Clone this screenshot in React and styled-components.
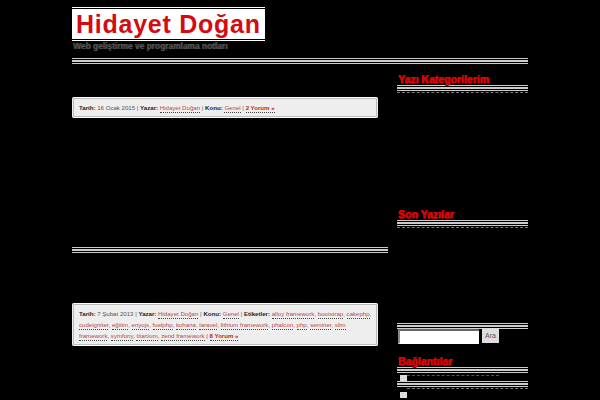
import React from 'react';
import styled, { createGlobalStyle } from 'styled-components';

const GlobalStyle = createGlobalStyle`
  html, body {
    margin: 0;
    height: 400px;
    overflow: hidden;
    background: #000;
    font-family: "Liberation Sans", Arial, sans-serif;
  }
`;

const Page = styled.div`
  width: 456px;
  margin: 0 0 0 72px;
`;

const Masthead = styled.header`
  padding-top: 7px;
`;

const SiteTitle = styled.h1`
  width: 193px;
  height: 34px;
  box-sizing: border-box;
  margin: 0;
  border-top: 1px solid #fff;
  border-bottom: 1px solid #fff;
  box-shadow: inset 0 1px 0 #000, inset 0 -1px 0 #000;
  background: #fff;
  color: #d40b0f;
  font-size: 25px;
  line-height: 32px;
  font-weight: 700;
  letter-spacing: 0.75px;
  padding-left: 4px;
  white-space: nowrap;
`;

const Tagline = styled.p`
  margin: 0 0 0 1px;
  height: 10px;
  font-size: 8.4px;
  line-height: 10px;
  font-weight: 700;
  color: #555;
  text-shadow: 1px 0 0 #333;
  white-space: nowrap;
`;

const Rule = styled.div`
  height: 2px;
  width: 100%;
  margin-top: ${p => p.$top || 0}px;
  border-top: 1px solid #ccc;
  border-bottom: 1px solid #ccc;
  padding: 1px 0;
  background: #ccc;
  background-clip: content-box;
`;

const Columns = styled.div`
  display: flex;
  align-items: flex-start;
`;

const Main = styled.main`
  width: 316px;
  flex: none;
`;

const Sidebar = styled.aside`
  width: 131px;
  margin-left: 9px;
  flex: none;
`;

const MetaBox = styled.div`
  width: 306px;
  box-sizing: border-box;
  margin-top: ${p => p.$top}px;
  padding: 4px 4px 4px 7px;
  background: #eee;
  border-top: 1px solid #fff;
  border-bottom: 1px solid #fff;
  outline: 1px solid #bbb;
  outline-offset: -2px;
  border-radius: 2px;
  font-size: 6.1px;
  line-height: 11px;
  color: #555;
`;

const Label = styled.strong`
  color: #222;
`;

const MetaLink = styled.a`
  color: #b8474a;
  border-bottom: 1px dotted #444;
  padding-bottom: 1px;
`;

const CommentLink = styled.strong`
  color: #b11f24;
  border-bottom: 1px dotted #444;
  padding-bottom: 1px;
`;

const WidgetTitle = styled.h3`
  margin: ${p => p.$top}px 0 0 1px;
  height: 11px;
  font-size: 10.5px;
  line-height: 11px;
  font-weight: 700;
  color: #d80a0a;
  text-shadow: 1px 0 0 #a00, 0 1px 0 #900;
  white-space: nowrap;
`;

const DottedLine = styled.div`
  height: 0;
  margin: ${p => p.$top || 1}px 0 0 ${p => p.$left || 0}px;
  border-top: 1px dashed #777;
`;

const SearchForm = styled.form`
  display: flex;
  align-items: flex-start;
  margin-left: 1px;
`;

const SearchInput = styled.div`
  width: 79px;
  height: 12px;
  background: #fff;
  border-left: 2px solid #888;
  border-top: 2px solid #666;
  border-bottom: 1px solid #fff;
`;

const SearchButton = styled.button`
  width: 17px;
  height: 15px;
  margin: -1px 0 0 3px;
  padding: 0;
  border: 0;
  background: #ddd;
  color: #555;
  font: 7px "Liberation Sans", sans-serif;
`;

const ListRow = styled.div`
  display: flex;
  align-items: flex-start;
  margin-top: ${p => p.$top}px;
`;

const ListBullet = styled.div`
  width: 7px;
  height: 6px;
  margin-left: 3px;
  flex: none;
  background: #ddd;
`;

const ListText = styled.div`
  width: 92px;
  border-top: 1px dashed #555;
`;

export default function App () {
  return (
    <Page>
      <GlobalStyle />
      <Masthead>
        <SiteTitle>Hidayet Doğan</SiteTitle>
        <Tagline>Web geliştirme ve programlama notları</Tagline>
        <Rule $top={7} />
      </Masthead>
      <Columns>
        <Main>
          <MetaBox $top={33}>
            <Label>Tarih:</Label> 16 Ocak 2015 | <Label>Yazar:</Label> <MetaLink>Hidayet Doğan</MetaLink> | <Label>Konu:</Label> <MetaLink>Genel</MetaLink> | <CommentLink>2 Yorum »</CommentLink>
          </MetaBox>
          <Rule $top={129} />
          <MetaBox $top={50}>
            <Label>Tarih:</Label> 7 Şubat 2013 | <Label>Yazar:</Label> <MetaLink>Hidayet Doğan</MetaLink> | <Label>Konu:</Label> <MetaLink>Genel</MetaLink> | <Label>Etiketler:</Label> <MetaLink>alloy framework</MetaLink>, <MetaLink>bootstrap</MetaLink>, <MetaLink>cakephp</MetaLink>, <MetaLink>codeigniter</MetaLink>, <MetaLink>eğitim</MetaLink>, <MetaLink>enyojs</MetaLink>, <MetaLink>fuelphp</MetaLink>, <MetaLink>kohana</MetaLink>, <MetaLink>laravel</MetaLink>, <MetaLink>lithium framework</MetaLink>, <MetaLink>phalcon</MetaLink>, <MetaLink>php</MetaLink>, <MetaLink>seminer</MetaLink>, <MetaLink>slim framework</MetaLink>, <MetaLink>symfony</MetaLink>, <MetaLink>titanium</MetaLink>, <MetaLink>zend framework</MetaLink> | <CommentLink>8 Yorum »</CommentLink>
          </MetaBox>
        </Main>
        <Sidebar>
          <WidgetTitle $top={10}>Yazı Kategorilerim</WidgetTitle>
          <Rule />
          <DottedLine />
          <WidgetTitle $top={116}>Son Yazılar</WidgetTitle>
          <Rule />
          <DottedLine />
          <Rule $top={95} />
          <SearchForm>
            <SearchInput />
            <SearchButton type='button'>Ara</SearchButton>
          </SearchForm>
          <WidgetTitle $top={12}>Bağlantılar</WidgetTitle>
          <Rule />
          <ListRow $top={2}>
            <ListBullet />
            <ListText />
          </ListRow>
          <Rule />
          <DottedLine $left={10} />
          <ListRow $top={3}>
            <ListBullet />
          </ListRow>
        </Sidebar>
      </Columns>
    </Page>
  );
}
